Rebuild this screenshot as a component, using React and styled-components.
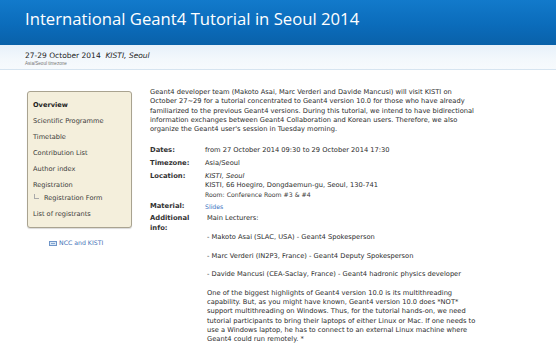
import React from "react";
import styled, { createGlobalStyle } from "styled-components";

const Global = createGlobalStyle`
  html, body { margin: 0; padding: 0; background: #ffffff; }
  body { font-family: "DejaVu Sans", Verdana, sans-serif; color: #2a2a2a; }
`;

const Header = styled.header`
  height: 45px;
  box-sizing: border-box;
  padding: 8px 0 0 25px;
  background: linear-gradient(to bottom, #127acb 0%, #0b6cbb 55%, #0961a9 100%);
`;

const Title = styled.h1`
  margin: 0;
  font-family: "Open Sans", "Liberation Sans", sans-serif;
  font-weight: 400;
  font-size: 16.7px;
  line-height: 22px;
  color: #ffffff;
`;

const SubHeader = styled.div`
  height: 25px;
  box-sizing: border-box;
  padding: 6px 0 0 25px;
  background: linear-gradient(to bottom, #e7f1fa 0%, #f3f8fc 60%, #f7fafd 100%);
  border-bottom: 1px solid #d6e4f0;
`;

const DateLine = styled.div`
  font-size: 7.5px;
  line-height: 9px;
  color: #222;
  em { font-style: italic; }
`;

const Tz = styled.div`
  font-family: "Liberation Sans", sans-serif;
  font-size: 4.6px;
  line-height: 6px;
  color: #777;
  margin-top: 1px;
`;

const Body = styled.div`
  display: grid;
  grid-template-columns: 148px 1fr;
`;

const Side = styled.aside`
  padding: 21px 0 0 27px;
`;

const Menu = styled.nav`
  width: 105px;
  box-sizing: border-box;
  background: #f4efdc;
  border: 1px solid #a9a390;
  border-radius: 3px;
  box-shadow: 0 1px 1px rgba(0, 0, 0, 0.15);
  padding: 9px 0 4px 5px;
`;

const MenuItem = styled.div`
  font-size: 6.6px;
  line-height: 8px;
  color: ${(p) => (p.$active ? "#222" : "#3a3a3a")};
  font-weight: ${(p) => (p.$active ? 700 : 400)};
  padding: ${(p) => (p.$sub ? "0 0 5px 0" : "0 0 8px 0")};
  white-space: nowrap;
`;

const SubMark = styled.span`
  display: inline-block;
  width: 4px;
  height: 4px;
  border-left: 1px solid #aaa;
  border-bottom: 1px solid #aaa;
  margin: 0 5px 0 1px;
  vertical-align: 1px;
`;

const Partner = styled.a`
  display: flex;
  align-items: center;
  gap: 2px;
  margin: 11px 0 0 22px;
  font-size: 6.2px;
  line-height: 8px;
  color: #3d6fb6;
  text-decoration: none;
`;

const Main = styled.main`
  padding: 18px 8px 0 2px;
`;

const Description = styled.p`
  margin: 0 0 12px 0;
  font-size: 6.7px;
  line-height: 9.3px;
  color: #2b2b2b;
`;

const Details = styled.div`
  display: grid;
  grid-template-columns: 55px 1fr;
  row-gap: 3.5px;
  font-size: 6.7px;
`;

const Label = styled.div`
  font-weight: 700;
  font-size: 6.8px;
  color: #333;
  line-height: 9.3px;
`;

const Value = styled.div`
  color: #2b2b2b;
  line-height: 9.3px;
`;

const Small = styled.div`
  font-size: 6.2px;
  line-height: ${(p) => (p.$link ? "9.3px" : "7.5px")};
  color: ${(p) => (p.$link ? "#3a72c2" : "#3a3a3a")};
`;

const Info = styled.div`
  padding-left: 2px;
  line-height: 9.3px;
  p { margin: 0 0 9.3px 0; }
`;

const LinkIcon = () => (
  <svg width="8" height="5" viewBox="0 0 8 5">
    <rect x="0.5" y="0.5" width="7" height="4" fill="#dbe8f6" stroke="#6f95c8" strokeWidth="1" />
    <line x1="2" y1="2.5" x2="6" y2="2.5" stroke="#6f95c8" strokeWidth="0.8" />
  </svg>
);

export default function App() {
  const items = [
    { t: "Overview", active: true },
    { t: "Scientific Programme" },
    { t: "Timetable" },
    { t: "Contribution List" },
    { t: "Author index" },
    { t: "Registration", sub: true },
  ];
  return (
    <>
      <Global />
      <Header>
        <Title>International Geant4 Tutorial in Seoul 2014</Title>
      </Header>
      <SubHeader>
        <DateLine>
          27-29 October 2014&nbsp; <em>KISTI, Seoul</em>
        </DateLine>
        <Tz>Asia/Seoul timezone</Tz>
      </SubHeader>
      <Body>
        <Side>
          <Menu>
            {items.map((i) => (
              <MenuItem key={i.t} $active={i.active} $sub={i.sub}>
                {i.t}
              </MenuItem>
            ))}
            <MenuItem>
              <SubMark />
              Registration Form
            </MenuItem>
            <MenuItem $sub>List of registrants</MenuItem>
          </Menu>
          <Partner href="#">
            <LinkIcon />
            NCC and KISTI
          </Partner>
        </Side>
        <Main>
          <Description>
            Geant4 developer team (Makoto Asai, Marc Verderi and Davide Mancusi) will visit KISTI on
            <br />
            October 27~29 for a tutorial concentrated to Geant4 version 10.0 for those who have already
            <br />
            familiarized to the previous Geant4 versions. During this tutorial, we intend to have bidirectional
            <br />
            information exchanges between Geant4 Collaboration and Korean users. Therefore, we also
            <br />
            organize the Geant4 user's session in Tuesday morning.
          </Description>
          <Details>
            <Label>Dates:</Label>
            <Value>from 27 October 2014 09:30 to 29 October 2014 17:30</Value>
            <Label>Timezone:</Label>
            <Value>Asia/Seoul</Value>
            <Label>Location:</Label>
            <Value>
              <em>KISTI, Seoul</em>
              <br />
              KISTI, 66 Hoegiro, Dongdaemun-gu, Seoul, 130-741
              <Small>Room: Conference Room #3 &amp; #4</Small>
            </Value>
            <Label>Material:</Label>
            <Value>
              <Small $link>Slides</Small>
            </Value>
            <Label>
              Additional
              <br />
              info:
            </Label>
            <Value>
              <Info>
                <p>Main Lecturers:</p>
                <p>- Makoto Asai (SLAC, USA) - Geant4 Spokesperson</p>
                <p>- Marc Verderi (IN2P3, France) - Geant4 Deputy Spokesperson</p>
                <p>- Davide Mancusi (CEA-Saclay, France) - Geant4 hadronic physics developer</p>
                <p>
                  One of the biggest highlights of Geant4 version 10.0 is its multithreading
                  <br />
                  capability. But, as you might have known, Geant4 version 10.0 does *NOT*
                  <br />
                  support multithreading on Windows. Thus, for the tutorial hands-on, we need
                  <br />
                  tutorial participants to bring their laptops of either Linux or Mac. If one needs to
                  <br />
                  use a Windows laptop, he has to connect to an external Linux machine where
                  <br />
                  Geant4 could run remotely. *
                </p>
              </Info>
            </Value>
          </Details>
        </Main>
      </Body>
    </>
  );
}
